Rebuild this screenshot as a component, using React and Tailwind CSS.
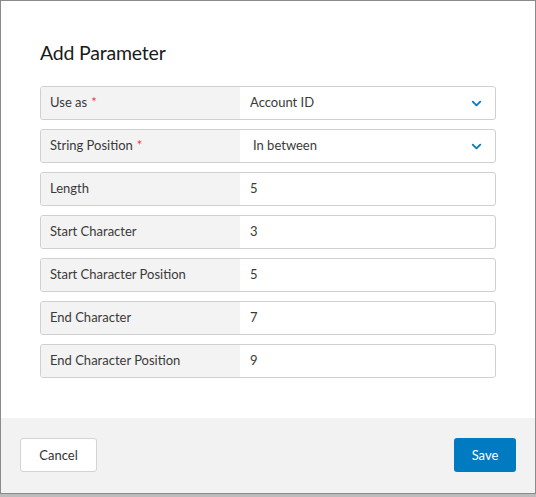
import { ChevronDown } from 'lucide-react'

const rows = [
  { label: 'Use as', value: 'Account ID', required: true, select: true },
  { label: 'String Position', value: 'In between', required: true, select: true, indent: true },
  { label: 'Length', value: '5' },
  { label: 'Start Character', value: '3' },
  { label: 'Start Character Position', value: '5' },
  { label: 'End Character', value: '7' },
  { label: 'End Character Position', value: '9' },
]

export default function App() {
  return (
    <div className="h-[497px] w-[536px] bg-[#bcbcbc] font-['Lato','Liberation_Sans',sans-serif]">
      <div className="flex h-[494px] flex-col border border-[#8a8a8a] bg-white">
        <div className="flex-1 px-[39px] pt-[38px]">
          <h1 className="text-[19.5px] leading-[28px] tracking-[-0.2px] text-[#1a1a1a]">Add Parameter</h1>
          <div className="mt-[19px] flex flex-col gap-[9px]">
            {rows.map((r) => (
              <div key={r.label} className="flex h-[34px] overflow-hidden rounded-[3px] border border-[#d0d0d0] text-[13px] text-[#3a3a3a]">
                <div className="flex w-[199px] items-center bg-[#f3f3f3] pl-[9px]">
                  {r.label}
                  {r.required && <span className="ml-[4px] text-[#e8414b]">*</span>}
                </div>
                <div className={`flex flex-1 items-center justify-between pr-[11px] ${r.indent ? 'pl-[13px]' : 'pl-[10px]'}`}>
                  <span>{r.value}</span>
                  {r.select && <ChevronDown className="h-[15px] w-[15px] text-[#0a7cc1]" strokeWidth={3} />}
                </div>
              </div>
            ))}
          </div>
        </div>
        <div className="flex h-[75px] items-start justify-between bg-[#f2f2f2] px-[19px] pt-[20px]">
          <button className="h-[34px] w-[77px] rounded-[3px] border border-[#d4d4d4] bg-white pt-[2px] text-[13px] text-[#333]">
            Cancel
          </button>
          <button className="h-[34px] w-[62px] rounded-[3px] bg-[#007bc2] pt-[2px] text-[13px] text-white">
            Save
          </button>
        </div>
      </div>
    </div>
  )
}
